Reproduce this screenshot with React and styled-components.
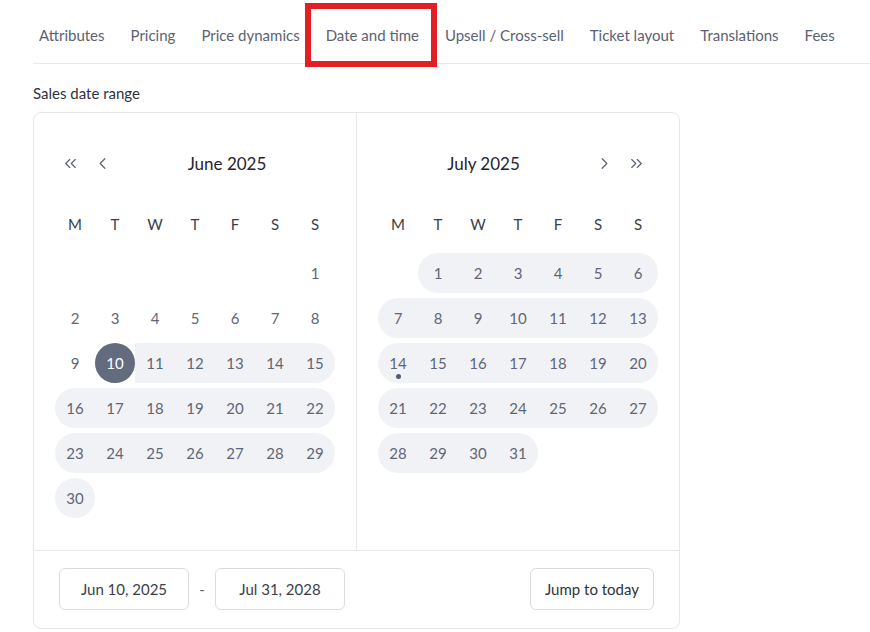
import React from "react";
import styled, { createGlobalStyle } from "styled-components";
import { ChevronLeft, ChevronRight, ChevronsLeft, ChevronsRight } from "lucide-react";

const Global = createGlobalStyle`
  html, body { margin: 0; padding: 0; background: #fff; }
  body { font-family: Lato, "Open Sans", sans-serif; color: #333; }
  * { box-sizing: border-box; }
`;

const Page = styled.div`
  padding-left: 33px;
`;

const TabList = styled.div`
  display: flex;
  align-items: flex-start;
  gap: 26px;
  height: 64px;
  padding: 24px 0 0 6px;
  border-bottom: 1px solid #e8e9ec;
`;

const Tab = styled.div`
  position: relative;
  font-size: 15px;
  line-height: 22px;
  color: #5b6272;
  white-space: nowrap;
`;

const Highlight = styled.span`
  position: absolute;
  left: -21px;
  right: -18px;
  top: -21px;
  bottom: -21px;
  border: 6px solid #e31e24;
  pointer-events: none;
`;

const Label = styled.div`
  margin-top: 18px;
  font-size: 15px;
  line-height: 22px;
  color: #2f333b;
`;

const Card = styled.div`
  margin-top: 8px;
  width: 647px;
  border: 1px solid #e6e7ea;
  border-radius: 8px;
`;

const Months = styled.div`
  display: grid;
  grid-template-columns: 322px 323px;
  border-bottom: 1px solid #e6e7ea;
`;

const Panel = styled.div`
  padding: 30px 21px 32px 21px;
  border-left: ${(p) => (p.$divider ? "1px solid #e6e7ea" : "none")};
`;

const Header = styled.div`
  display: flex;
  align-items: center;
  height: 40px;
  padding-right: ${(p) => (p.$right ? "5px" : "0")};
`;

const NavBtn = styled.button`
  width: 30px;
  height: 30px;
  display: flex;
  align-items: center;
  justify-content: center;
  border: none;
  background: none;
  padding: 0;
  color: #5b6272;
  margin-right: 2px;
`;

const Title = styled.div`
  flex: 1;
  text-align: center;
  font-size: 17px;
  color: #1f2430;
`;

const Grid = styled.div`
  display: grid;
  grid-template-columns: repeat(7, 40px);
  grid-auto-rows: 40px;
  row-gap: 5px;
`;

const Dow = styled(Grid)`
  margin-top: 21px;
  margin-bottom: 9px;
`;

const DowCell = styled.div`
  display: flex;
  align-items: center;
  justify-content: center;
  font-size: 15px;
  color: #3a3e48;
`;

const Day = styled.div`
  position: relative;
  display: flex;
  align-items: center;
  justify-content: center;
  font-size: 15px;
  color: ${(p) => (p.$selected ? "#fff" : "#5f6675")};
  background: ${(p) => (p.$selected ? "#636b7e" : p.$inRange ? "#f1f2f6" : "transparent")};
  border-radius: ${(p) =>
    p.$selected ? "20px" : `${p.$roundL ? 20 : 0}px ${p.$roundR ? 20 : 0}px ${p.$roundR ? 20 : 0}px ${p.$roundL ? 20 : 0}px`};
  grid-column: ${(p) => p.$col};
`;

const Today = styled.span`
  position: absolute;
  left: 50%;
  bottom: 4px;
  width: 5px;
  height: 5px;
  margin-left: -2.5px;
  border-radius: 50%;
  background: #555c6c;
`;

const Footer = styled.div`
  display: flex;
  align-items: center;
  padding: 17px 25px 18px;
`;

const DateBox = styled.div`
  width: 130px;
  height: 42px;
  border: 1px solid #d9dce1;
  border-radius: 6px;
  display: flex;
  align-items: center;
  justify-content: center;
  font-size: 15px;
  color: #3a3e48;
`;

const Dash = styled.span`
  width: 26px;
  text-align: center;
  color: #5b6272;
  font-size: 15px;
`;

const JumpBtn = styled.button`
  margin-left: auto;
  height: 42px;
  padding: 0 14px;
  border: 1px solid #d9dce1;
  border-radius: 6px;
  background: #fff;
  font-family: inherit;
  font-size: 15px;
  color: #2f333b;
`;

const DOW = ["M", "T", "W", "T", "F", "S", "S"];

function Month({ title, offset, days, rangeFrom, rangeTo, selected, today, left, right, divider }) {
  const cells = [];
  for (let d = 1; d <= days; d++) {
    const idx = offset + d - 1;
    const col = (idx % 7) + 1;
    const inRange = d >= rangeFrom && d <= rangeTo;
    const roundL = inRange && (col === 1 || d === rangeFrom);
    const roundR = inRange && (col === 7 || d === rangeTo);
    cells.push(
      <Day
        key={d}
        $col={col}
        $inRange={inRange}
        $roundL={roundL}
        $roundR={roundR}
        $selected={d === selected}
      >
        {d}
        {d === today && <Today />}
      </Day>
    );
  }
  return (
    <Panel $divider={divider}>
      <Header $right={right}>
        {left && (
          <>
            <NavBtn><ChevronsLeft size={19} strokeWidth={1.5} /></NavBtn>
            <NavBtn><ChevronLeft size={19} strokeWidth={1.5} /></NavBtn>
          </>
        )}
        <Title>{title}</Title>
        {right && (
          <>
            <NavBtn><ChevronRight size={19} strokeWidth={1.5} /></NavBtn>
            <NavBtn><ChevronsRight size={19} strokeWidth={1.5} /></NavBtn>
          </>
        )}
      </Header>
      <Dow>
        {DOW.map((d, i) => (
          <DowCell key={i}>{d}</DowCell>
        ))}
      </Dow>
      <Grid>{cells}</Grid>
    </Panel>
  );
}

export default function App() {
  const tabs = [
    "Attributes",
    "Pricing",
    "Price dynamics",
    "Date and time",
    "Upsell / Cross-sell",
    "Ticket layout",
    "Translations",
    "Fees",
  ];
  return (
    <Page>
      <Global />
      <TabList>
        {tabs.map((t) => (
          <Tab key={t}>
            {t}
            {t === "Date and time" && <Highlight />}
          </Tab>
        ))}
      </TabList>
      <Label>Sales date range</Label>
      <Card>
        <Months>
          <Month title="June 2025" offset={6} days={30} rangeFrom={10} rangeTo={30} selected={10} left />
          <Month title="July 2025" offset={1} days={31} rangeFrom={1} rangeTo={31} today={14} right divider />
        </Months>
        <Footer>
          <DateBox>Jun 10, 2025</DateBox>
          <Dash>-</Dash>
          <DateBox>Jul 31, 2028</DateBox>
          <JumpBtn>Jump to today</JumpBtn>
        </Footer>
      </Card>
    </Page>
  );
}
